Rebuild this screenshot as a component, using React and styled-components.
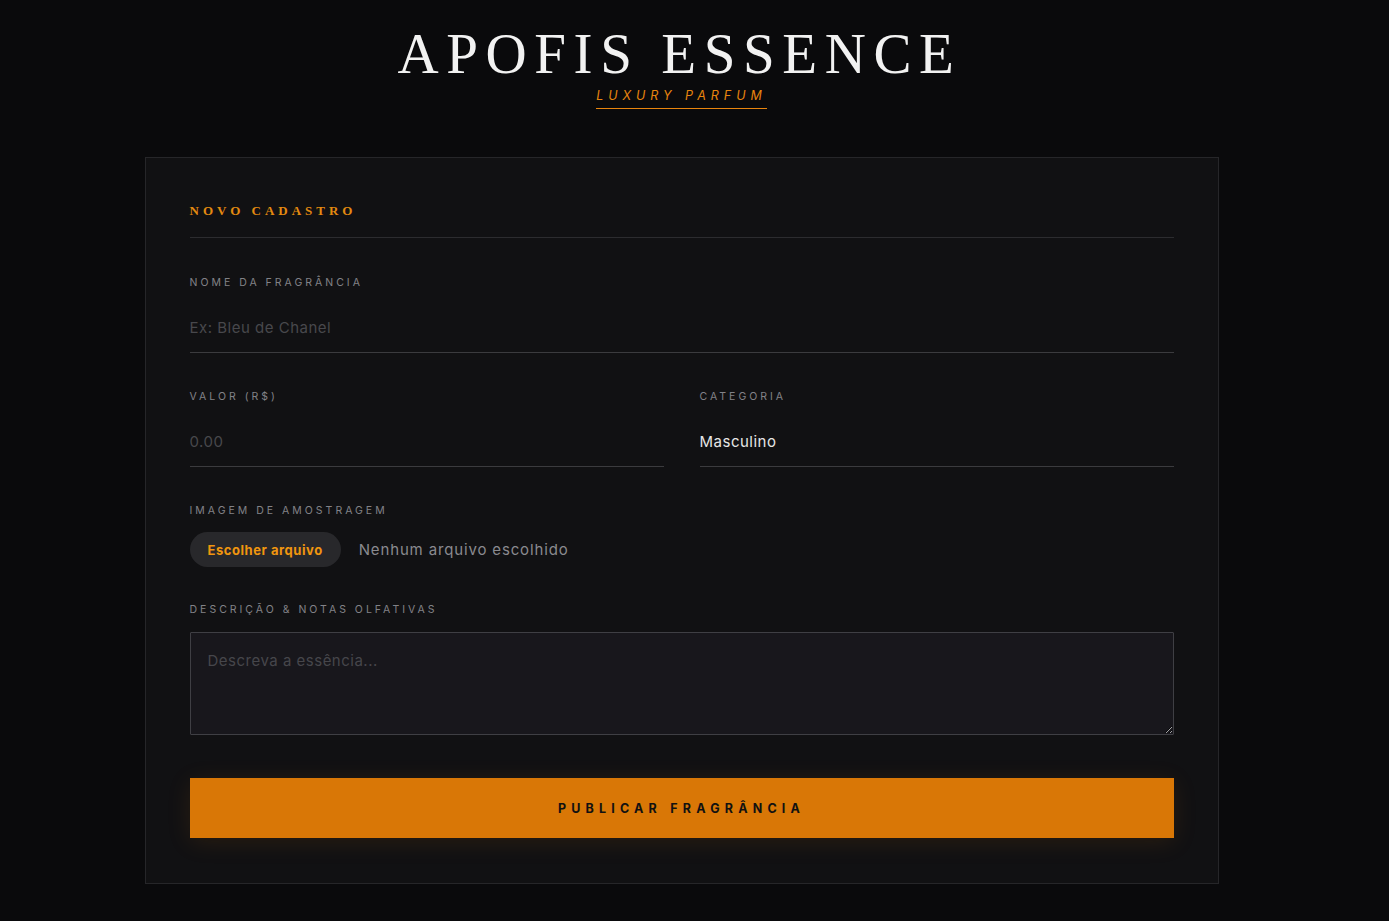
import React from 'react';
import styled, { createGlobalStyle } from 'styled-components';

const GlobalStyle = createGlobalStyle`
    html, body {
        margin: 0;
        padding: 0;
        background: #0a0a0c;
    }
    body {
        font-family: "Inter", "Liberation Sans", sans-serif;
        color: #e8e8e8;
    }
    * { box-sizing: border-box; }
`

const Page = styled.div`
    min-height: 921px;
    display: flex;
    flex-direction: column;
    align-items: center;
    padding-top: 22px;
    padding-right: 26px;
`

const Brand = styled.header`
    display: flex;
    flex-direction: column;
    align-items: center;
`

const BrandTitle = styled.h1`
    margin: 0 4px 0 0;
    font-family: "Liberation Serif", "DejaVu Serif", serif;
    font-weight: 400;
    font-size: 57px;
    line-height: 64px;
    letter-spacing: 7.6px;
    color: #f2f2f2;
`

const BrandTag = styled.span`
    margin-top: 2px;
    font-family: "Inter", "Liberation Sans", sans-serif;
    font-style: italic;
    font-size: 12.5px;
    letter-spacing: 5px;
    color: #e8850e;
    padding-bottom: 5px;
    border-bottom: 1px solid #e8850e;
`

const Card = styled.section`
    width: 1074px;
    margin-top: 48px;
    background: #111113;
    border: 1px solid #262629;
    padding: 45px 44px 45px;
`

const CardTitle = styled.h2`
    margin: 0;
    font-family: "Liberation Serif", "DejaVu Serif", serif;
    font-weight: 700;
    font-size: 13px;
    letter-spacing: 4px;
    color: #e38a10;
    padding-bottom: 18px;
    border-bottom: 1px solid #2c2c2f;
`

const Field = styled.div`
    display: flex;
    flex-direction: column;
    margin-top: ${p => p.$top || 37}px;
`

const Row = styled.div`
    display: grid;
    grid-template-columns: 1fr 1fr;
    column-gap: 36px;
`

const Label = styled.label`
    font-size: 10.5px;
    letter-spacing: 3px;
    color: #828287;
    text-transform: uppercase;
    line-height: 14px;
`

const TextInput = styled.input`
    margin-top: 28px;
    background: transparent;
    border: none;
    border-bottom: 1px solid #3b3b3e;
    color: #e6e6e6;
    font-family: inherit;
    font-size: 15px;
    letter-spacing: 0.5px;
    padding: 0 0 15px;
    outline: none;
    &::placeholder { color: #48484c; }
`

const SelectBox = styled.select`
    margin-top: 28px;
    background: transparent;
    border: none;
    border-bottom: 1px solid #3b3b3e;
    color: #e6e6e6;
    font-family: inherit;
    font-size: 15px;
    letter-spacing: 0.5px;
    padding: 0 0 15px;
    outline: none;
    appearance: none;
    option { background: #111113; }
`

const FileRow = styled.div`
    display: flex;
    align-items: center;
    gap: 18px;
    margin-top: 14px;
`

const FileButton = styled.button`
    height: 35px;
    padding: 0 18px;
    border: none;
    border-radius: 18px;
    background: #28282b;
    color: #f0960f;
    font-family: inherit;
    font-weight: 700;
    font-size: 13px;
    letter-spacing: 0.55px;
    cursor: pointer;
`

const FileName = styled.span`
    font-size: 15px;
    letter-spacing: 0.85px;
    color: #8a8a8f;
`

const TextArea = styled.textarea`
    margin-top: 15px;
    height: 103px;
    background: #18171c;
    border: 1px solid #3f3f44;
    border-radius: 1px;
    color: #e6e6e6;
    font-family: inherit;
    font-size: 15px;
    letter-spacing: 0.5px;
    padding: 18px 17px;
    outline: none;
    resize: vertical;
    &::placeholder { color: #46464b; }
`

const Submit = styled.button`
    margin-top: 43px;
    width: 100%;
    height: 60px;
    border: none;
    background: #d97706;
    color: #111;
    font-family: inherit;
    font-weight: 700;
    font-size: 12.5px;
    letter-spacing: 5.2px;
    box-shadow: 0 4px 24px rgba(217, 119, 6, 0.12);
    cursor: pointer;
`

export default function App() {
    return (
        <>
            <GlobalStyle />
            <Page>
                <Brand>
                    <BrandTitle>APOFIS ESSENCE</BrandTitle>
                    <BrandTag>LUXURY PARFUM</BrandTag>
                </Brand>
                <Card>
                    <CardTitle>NOVO CADASTRO</CardTitle>
                    <Field $top={38}>
                        <Label>Nome da Fragrância</Label>
                        <TextInput placeholder="Ex: Bleu de Chanel" />
                    </Field>
                    <Row>
                        <Field>
                            <Label>Valor (R$)</Label>
                            <TextInput placeholder="0.00" />
                        </Field>
                        <Field>
                            <Label>Categoria</Label>
                            <SelectBox defaultValue="Masculino">
                                <option>Masculino</option>
                                <option>Feminino</option>
                                <option>Unissex</option>
                            </SelectBox>
                        </Field>
                    </Row>
                    <Field>
                        <Label>Imagem de Amostragem</Label>
                        <FileRow>
                            <FileButton type="button">Escolher arquivo</FileButton>
                            <FileName>Nenhum arquivo escolhido</FileName>
                        </FileRow>
                    </Field>
                    <Field $top={36}>
                        <Label>Descrição &amp; Notas Olfativas</Label>
                        <TextArea placeholder="Descreva a essência..." />
                    </Field>
                    <Submit type="button">PUBLICAR FRAGRÂNCIA</Submit>
                </Card>
            </Page>
        </>
    );
}
